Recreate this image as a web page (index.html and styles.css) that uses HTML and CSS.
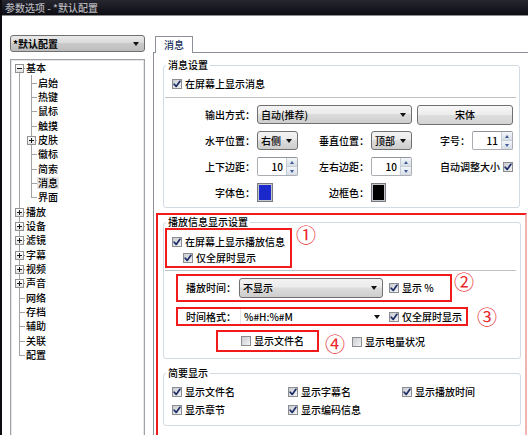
FILE: index.html
```html
<!DOCTYPE html>
<html lang="zh-CN">
<head>
<meta charset="utf-8">
<title>参数选项</title>
<link rel="stylesheet" href="styles.css">
</head>
<body>
<div class="window">
  <div class="titlebar">参数选项 - *默认配置</div>
  <div class="main">
    <aside class="sidebar">
      <div class="combo profile"><span class="combo-text">*默认配置</span><span class="arrow"></span></div>
      <div class="tree">
        <div class="row"><span class="c c-first"><i class="box"></i></span><span class="t">基本</span></div>
        <div class="row"><span class="c c-line"></span><span class="c c-tee"></span><span class="t">启始</span></div>
        <div class="row"><span class="c c-line"></span><span class="c c-tee"></span><span class="t">热键</span></div>
        <div class="row"><span class="c c-line"></span><span class="c c-tee"></span><span class="t">鼠标</span></div>
        <div class="row"><span class="c c-line"></span><span class="c c-tee"></span><span class="t">触摸</span></div>
        <div class="row"><span class="c c-line"></span><span class="c c-tee"><i class="box plus"></i></span><span class="t">皮肤</span></div>
        <div class="row"><span class="c c-line"></span><span class="c c-tee"></span><span class="t">徽标</span></div>
        <div class="row"><span class="c c-line"></span><span class="c c-tee"></span><span class="t">简索</span></div>
        <div class="row"><span class="c c-line"></span><span class="c c-tee"></span><span class="t sel">消息</span></div>
        <div class="row"><span class="c c-line"></span><span class="c c-last"></span><span class="t">界面</span></div>
        <div class="row"><span class="c c-tee"><i class="box plus"></i></span><span class="t">播放</span></div>
        <div class="row"><span class="c c-tee"><i class="box plus"></i></span><span class="t">设备</span></div>
        <div class="row"><span class="c c-tee"><i class="box plus"></i></span><span class="t">滤镜</span></div>
        <div class="row"><span class="c c-tee"><i class="box plus"></i></span><span class="t">字幕</span></div>
        <div class="row"><span class="c c-tee"><i class="box plus"></i></span><span class="t">视频</span></div>
        <div class="row"><span class="c c-tee"><i class="box plus"></i></span><span class="t">声音</span></div>
        <div class="row"><span class="c c-tee"></span><span class="t">网络</span></div>
        <div class="row"><span class="c c-tee"></span><span class="t">存档</span></div>
        <div class="row"><span class="c c-tee"></span><span class="t">辅助</span></div>
        <div class="row"><span class="c c-tee"></span><span class="t">关联</span></div>
        <div class="row"><span class="c c-last"></span><span class="t">配置</span></div>
      </div>
    </aside>

    <section class="content">
      <div class="tabs"><div class="tab">消息</div></div>
      <div class="panel">
        <fieldset class="group g1">
          <legend>消息设置</legend>
          <div class="check-row">
            <label class="chk"><span class="cb on"><svg viewBox="0 0 8 8"><path d="M1.2 4.2 L3.2 6.4 L6.9 1.3"/></svg></span><span>在屏幕上显示消息</span></label>
          </div>
          <div class="sep"></div>
          <div class="form">
            <span class="lbl">输出方式：</span>
            <div class="combo wide"><span class="combo-text">自动(推荐)</span><span class="arrow"></span></div>
            <div class="btn">宋体</div>

            <span class="lbl">水平位置：</span>
            <div class="combo"><span class="combo-text">右侧</span><span class="arrow"></span></div>
            <span class="lbl">垂直位置：</span>
            <div class="combo"><span class="combo-text">顶部</span><span class="arrow"></span></div>
            <span class="lbl">字号：</span>
            <div class="spin"><span class="val">11</span><span class="btns"><i class="up"></i><i class="dn"></i></span></div>

            <span class="lbl">上下边距：</span>
            <div class="spin"><span class="val">10</span><span class="btns"><i class="up"></i><i class="dn"></i></span></div>
            <span class="lbl">左右边距：</span>
            <div class="spin"><span class="val">10</span><span class="btns"><i class="up"></i><i class="dn"></i></span></div>
            <label class="chk autosize"><span>自动调整大小</span><span class="cb on"><svg viewBox="0 0 8 8"><path d="M1.2 4.2 L3.2 6.4 L6.9 1.3"/></svg></span></label>

            <span class="lbl">字体色：</span>
            <div class="swatch blue"></div>
            <span class="lbl">边框色：</span>
            <div class="swatch black"></div>
          </div>
        </fieldset>

        <div class="mark">
          <fieldset class="group g2">
            <legend>播放信息显示设置</legend>
            <div class="ann-row r1">
              <div class="redbox box1">
                <label class="chk"><span class="cb on"><svg viewBox="0 0 8 8"><path d="M1.2 4.2 L3.2 6.4 L6.9 1.3"/></svg></span><span>在屏幕上显示播放信息</span></label>
                <label class="chk sub"><span class="cb on"><svg viewBox="0 0 8 8"><path d="M1.2 4.2 L3.2 6.4 L6.9 1.3"/></svg></span><span>仅全屏时显示</span></label>
              </div>
              <span class="num n1">①</span>
            </div>
            <div class="sep s2"></div>
            <div class="ann-row r2">
              <div class="redbox box2">
                <span class="flbl">播放时间：</span>
                <div class="combo time"><span class="combo-text">不显示</span><span class="arrow"></span></div>
                <label class="chk"><span class="cb on"><svg viewBox="0 0 8 8"><path d="M1.2 4.2 L3.2 6.4 L6.9 1.3"/></svg></span><span>显示 %</span></label>
              </div>
              <span class="num n2">②</span>
            </div>
            <div class="ann-row r3">
              <div class="redbox box3">
                <span class="flbl">时间格式：</span>
                <div class="ecombo"><span class="combo-text">%#H:%#M</span><span class="arrow"></span></div>
                <label class="chk"><span class="cb on"><svg viewBox="0 0 8 8"><path d="M1.2 4.2 L3.2 6.4 L6.9 1.3"/></svg></span><span>仅全屏时显示</span></label>
              </div>
              <span class="num n3">③</span>
            </div>
            <div class="ann-row r4">
              <div class="redbox box4">
                <label class="chk"><span class="cb"></span><span>显示文件名</span></label>
              </div>
              <span class="num n4">④</span>
              <label class="chk battery"><span class="cb"></span><span>显示电量状况</span></label>
            </div>
          </fieldset>

          <fieldset class="group g3">
            <legend>简要显示</legend>
            <div class="brief">
              <label class="chk"><span class="cb on"><svg viewBox="0 0 8 8"><path d="M1.2 4.2 L3.2 6.4 L6.9 1.3"/></svg></span><span>显示文件名</span></label>
              <label class="chk"><span class="cb on"><svg viewBox="0 0 8 8"><path d="M1.2 4.2 L3.2 6.4 L6.9 1.3"/></svg></span><span>显示字幕名</span></label>
              <label class="chk"><span class="cb on"><svg viewBox="0 0 8 8"><path d="M1.2 4.2 L3.2 6.4 L6.9 1.3"/></svg></span><span>显示播放时间</span></label>
              <label class="chk"><span class="cb on"><svg viewBox="0 0 8 8"><path d="M1.2 4.2 L3.2 6.4 L6.9 1.3"/></svg></span><span>显示章节</span></label>
              <label class="chk"><span class="cb on"><svg viewBox="0 0 8 8"><path d="M1.2 4.2 L3.2 6.4 L6.9 1.3"/></svg></span><span>显示编码信息</span></label>
            </div>
          </fieldset>
        </div>
      </div>
    </section>
  </div>
</div>
</body>
</html>
```

FILE: styles.css
```css
* { box-sizing: border-box; }
html, body { margin: 0; padding: 0; }
body {
  width: 528px;
  height: 435px;
  overflow: hidden;
  background: #fff;
  font-family: "Noto Sans CJK SC", "Liberation Sans", sans-serif;
  font-size: 10px;
  font-weight: 500;
  line-height: 12px;
  color: #000;
}
.window {
  height: 435px;
  display: flex;
  flex-direction: column;
  border-left: 2px solid #0c0c10;
}
.titlebar {
  height: 16px;
  flex: none;
  background: linear-gradient(#262631, #0d0d13);
  color: #b4b4ba;
  padding-left: 3px;
  line-height: 15px;
  border-bottom: 1px solid #8f8f92;
  white-space: nowrap;
}
.main {
  flex: 1;
  min-height: 0;
  display: flex;
  padding: 19px 0 0 8px;
}
.sidebar { width: 135px; flex: none; }
.content {
  flex: 1;
  margin-left: 8px;
  display: flex;
  flex-direction: column;
  min-width: 0;
}

/* combo boxes */
.combo {
  height: 19px;
  border: 1px solid #707070;
  border-radius: 3px;
  background: linear-gradient(#f3f3f3, #ebebeb 45%, #dcdcdc 50%, #cdcdcd);
  display: flex;
  align-items: center;
  padding-left: 3px;
  white-space: nowrap;
}
.combo-text { flex: 1; line-height: 14px; }
.arrow {
  flex: none;
  width: 0;
  height: 0;
  margin-right: 5px;
  border-left: 3.5px solid transparent;
  border-right: 3.5px solid transparent;
  border-top: 4px solid #111;
}
.profile {
  height: 17px;
  font-weight: bold;
  padding-left: 2px;
  background: linear-gradient(#e9e9e9, #dadada 45%, #c9c9c9 50%, #bdbdbd);
}

/* tree */
.tree {
  margin-top: 7px;
  height: 390px;
  border: 1px solid #9ea3aa;
  box-shadow: inset 0 0 0 1px #e6e6e6;
  padding: 1px 0 0 2px;
}
.row { display: flex; height: 14.35px; }
.c { position: relative; width: 12px; flex: none; }
.c::before {
  content: "";
  position: absolute;
  left: 6px; top: 0; bottom: 0;
  width: 1px;
  background: #a3a3a3;
}
.c-tee::after, .c-last::after, .c-first::after {
  content: "";
  position: absolute;
  left: 6px; right: 0; top: 50%;
  height: 1px;
  background: #a3a3a3;
}
.c-last::before { bottom: 50%; }
.c-first::before { top: 50%; }
.box {
  position: absolute;
  left: 2px; top: 50%;
  margin-top: -4px;
  width: 9px; height: 9px;
  border: 1px solid #919191;
  background: linear-gradient(#ffffff, #e2e2e2);
  z-index: 1;
}
.box::before {
  content: "";
  position: absolute;
  left: 1px; right: 1px; top: 3px;
  height: 1px;
  background: #1a1a1a;
}
.box.plus::after {
  content: "";
  position: absolute;
  top: 1px; bottom: 1px; left: 3px;
  width: 1px;
  background: #1a1a1a;
}
.t {
  align-self: center;
  line-height: 12px;
  padding: 0 1px;
  white-space: nowrap;
}
.t.sel { background: #e3e3e3; }

/* tabs */
.tabs {
  display: flex;
  height: 16px;
  margin-top: 1px;
  padding-left: 2px;
  flex: none;
}
.tab {
  position: relative;
  z-index: 1;
  width: 38px;
  height: 17px;
  border: 1px solid #8c9099;
  border-bottom: 0;
  background: #fff;
  color: #1d3660;
  text-align: center;
  line-height: 15px;
}
.panel {
  flex: 1;
  border-top: 1px solid #8c9099;
  border-left: 1px solid #8c9099;
  padding-top: 6px;
}

/* group boxes */
.group {
  margin: 0;
  padding: 0;
  min-width: 0;
  border: 1px solid #d2dae2;
  border-radius: 3px;
}
.group legend {
  margin-left: 2px;
  padding: 0 2px;
  line-height: 12px;
  height: 12px;
}
.g1 { margin: 0 8px 0 9px; }
.check-row {
  margin-top: 4px;
  height: 17px;
  padding-left: 8px;
  display: flex;
  align-items: center;
}
.sep {
  height: 1px;
  background: #bfc2c6;
  margin: 5px 3px 0 1px;
}

/* checkbox */
.chk {
  display: inline-flex;
  align-items: center;
  gap: 3px;
  white-space: nowrap;
}
.cb {
  flex: none;
  width: 10px;
  height: 10px;
  border: 1px solid #8b8d91;
  background: linear-gradient(135deg, #c9ccd1, #f3f3f4);
  display: inline-flex;
  align-items: center;
  justify-content: center;
}
.cb svg { width: 8px; height: 8px; display: block; }
.cb path {
  fill: none;
  stroke: #1c2c66;
  stroke-width: 1.7;
  stroke-linecap: round;
  stroke-linejoin: round;
}

/* form grid */
.form {
  margin-top: 7px;
  display: grid;
  grid-template-columns: 93px 41px 73px 41px 60px 41px;
  grid-template-rows: repeat(4, 19px);
  row-gap: 7px;
  padding-bottom: 5px;
}
.lbl {
  text-align: right;
  padding-right: 2px;
  align-self: center;
  white-space: nowrap;
}
.combo.wide { grid-column: 2 / 5; }
.btn {
  grid-column: 5 / 7;
  margin-left: 5px;
  height: 20px;
  border: 1px solid #707070;
  border-radius: 3px;
  background: linear-gradient(#f7f7f7, #ececec 48%, #dedede 52%, #d3d3d3);
  display: flex;
  align-items: center;
  justify-content: center;
}
.spin {
  display: flex;
  border: 1px solid #abadb3;
  border-top-color: #8f949b;
  border-radius: 2px;
  background: #fff;
}
.spin .val {
  flex: 1;
  text-align: right;
  padding-right: 3px;
  line-height: 17px;
}
.spin .btns {
  width: 11px;
  display: flex;
  flex-direction: column;
  border-left: 1px solid #c6ccd4;
}
.spin .btns i {
  flex: 1;
  display: flex;
  align-items: center;
  justify-content: center;
  background: linear-gradient(#f3f6fa, #d6dde6);
}
.spin .btns i + i { border-top: 1px solid #c6ccd4; }
.spin .btns i::before {
  content: "";
  width: 0; height: 0;
  border-left: 2.5px solid transparent;
  border-right: 2.5px solid transparent;
}
.spin .btns .up::before { border-bottom: 3px solid #3d5d92; }
.spin .btns .dn::before { border-top: 3px solid #3d5d92; }
.autosize { grid-column: 5 / 7; justify-self: end; }
.swatch {
  width: 16px;
  height: 19px;
  border: 1px solid #777a80;
  box-shadow: inset 0 0 0 1px #c4c6ca;
}
.swatch.blue { background: #1a28cc; }
.swatch.black { width: 15px; background: #000; }

/* annotation area */
.mark {
  margin: 5px 1px 0 2px;
  border: 2px solid #f21b1b;
  border-right-color: #f2b3b3;
  border-bottom: 0;
  padding: 1px 4px 0 5px;
  height: 230px;
}
.redbox { border: 2px solid #f21b1b; flex: none; }
.ann-row { display: flex; }
.num {
  font-family: "Noto Sans CJK SC", "DejaVu Sans", sans-serif;
  font-weight: 400;
  font-size: 20px;
  line-height: 20px;
  color: #e8262c;
  align-self: flex-start;
}
.r1 { margin-left: 1px; }
.box1 {
  width: 127px;
  height: 40px;
  padding: 3px 0 0 5px;
  display: flex;
  flex-direction: column;
}
.box1 .chk { height: 17px; }
.box1 .chk.sub { height: 16px; margin-left: 11px; }
.n1 { margin: -3px 0 0 4px; }
.s2 { margin-top: 2px; margin-right: 4px; }
.r2 { margin: 3px 0 0 12px; }
.box2, .box3 {
  display: flex;
  align-items: center;
  padding-left: 8px;
}
.box2 { width: 276px; height: 28px; }
.box3 { width: 292px; height: 19px; }
.flbl { width: 53px; flex: none; white-space: nowrap; }
.combo.time { width: 144px; height: 20px; margin-right: 6px; }
.n2 { margin: -2px 0 0 2px; }
.r3 { margin: 5px 0 0 12px; }
.ecombo {
  width: 143px;
  height: 15px;
  margin: 0 6px 0 1px;
  background: #fff;
  display: flex;
  align-items: center;
  padding-left: 3px;
  border-left: 1px solid #e4e6ea;
}
.ecombo .arrow { margin-right: 3px; }
.n3 { margin: 0 0 0 9px; }
.r4 { margin: 3px 0 0 52px; padding-bottom: 4px; }
.box4 {
  width: 103px;
  height: 22px;
  display: flex;
  align-items: center;
  padding-left: 23px;
}
.n4 { margin: 4px 0 0 6px; }
.battery { margin-left: 7px; align-self: center; }

.g3 { margin-top: 8px; }
.brief {
  margin-top: 4px;
  display: grid;
  grid-template-columns: 116px 114px auto;
  grid-template-rows: 17px 17px;
  row-gap: 1px;
  padding: 0 0 7px 8px;
}
```
